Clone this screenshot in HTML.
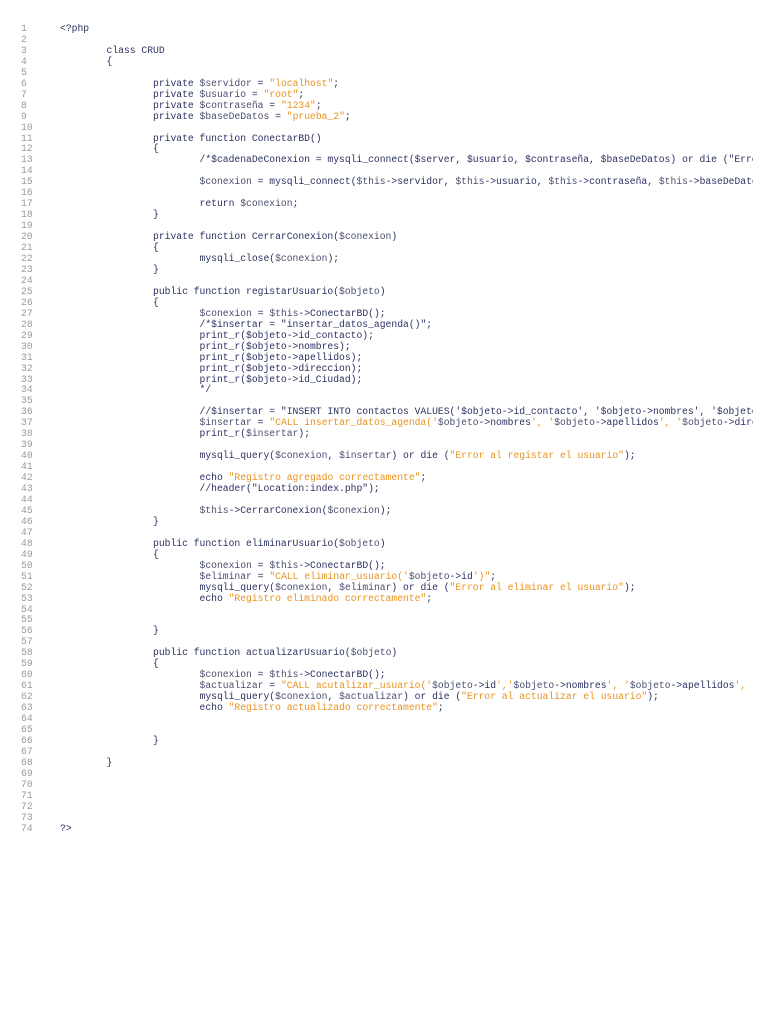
<!DOCTYPE html>
<html><head><meta charset="utf-8"><style>
html,body{margin:0;background:#fff;width:768px;height:1024px;overflow:hidden}
.w{position:absolute;left:0;top:24px;font-family:"Liberation Mono",monospace;font-size:9.7px;line-height:10.96px;white-space:pre;tab-size:8;-moz-tab-size:8}
.n{position:absolute;left:21px;color:#9a9a9a;width:30px}
.c{position:absolute;left:60px;color:#2b3160;width:693px;overflow:hidden}
.s{color:#e8921e}
.v{color:#4a4f6e}
</style></head><body>
<div class="w n">1
2
3
4
5
6
7
8
9
10
11
12
13
14
15
16
17
18
19
20
21
22
23
24
25
26
27
28
29
30
31
32
33
34
35
36
37
38
39
40
41
42
43
44
45
46
47
48
49
50
51
52
53
54
55
56
57
58
59
60
61
62
63
64
65
66
67
68
69
70
71
72
73
74</div>
<div class="w c">&lt;?php

	class CRUD
	{

		private <span class="v">$servidor</span> = <span class="s">"localhost"</span>;
		private <span class="v">$usuario</span> = <span class="s">"root"</span>;
		private <span class="v">$contraseña</span> = <span class="s">"1234"</span>;
		private <span class="v">$baseDeDatos</span> = <span class="s">"prueba_2"</span>;

		private function ConectarBD()
		{
			/*$cadenaDeConexion = mysqli_connect($server, $usuario, $contraseña, $baseDeDatos) or die ("Error al conectar");

			<span class="v">$conexion</span> = mysqli_connect(<span class="v">$this</span>-&gt;servidor, <span class="v">$this</span>-&gt;usuario, <span class="v">$this</span>-&gt;contraseña, <span class="v">$this</span>-&gt;baseDeDatos);

			return <span class="v">$conexion</span>;
		}

		private function CerrarConexion(<span class="v">$conexion</span>)
		{
			mysqli_close(<span class="v">$conexion</span>);
		}

		public function registarUsuario(<span class="v">$objeto</span>)
		{
			<span class="v">$conexion</span> = <span class="v">$this</span>-&gt;ConectarBD();
			/*$insertar = "insertar_datos_agenda()";
			print_r($objeto-&gt;id_contacto);
			print_r($objeto-&gt;nombres);
			print_r($objeto-&gt;apellidos);
			print_r($objeto-&gt;direccion);
			print_r($objeto-&gt;id_Ciudad);
			*/

			//$insertar = "INSERT INTO contactos VALUES('$objeto-&gt;id_contacto', '$objeto-&gt;nombres', '$objeto-&gt;apellidos')";
			<span class="v">$insertar</span> = <span class="s">"CALL insertar_datos_agenda('</span><span class="v">$objeto</span>-&gt;nombres<span class="s">', '</span><span class="v">$objeto</span>-&gt;apellidos<span class="s">', '</span><span class="v">$objeto</span>-&gt;direccion')";
			print_r(<span class="v">$insertar</span>);

			mysqli_query(<span class="v">$conexion</span>, <span class="v">$insertar</span>) or die (<span class="s">"Error al registar el usuario"</span>);

			echo <span class="s">"Registro agregado correctamente"</span>;
			//header("Location:index.php");

			<span class="v">$this</span>-&gt;CerrarConexion(<span class="v">$conexion</span>);
		}

		public function eliminarUsuario(<span class="v">$objeto</span>)
		{
			<span class="v">$conexion</span> = <span class="v">$this</span>-&gt;ConectarBD();
			<span class="v">$eliminar</span> = <span class="s">"CALL eliminar_usuario('</span><span class="v">$objeto</span>-&gt;id<span class="s">')"</span>;
			mysqli_query(<span class="v">$conexion</span>, <span class="v">$eliminar</span>) or die (<span class="s">"Error al eliminar el usuario"</span>);
			echo <span class="s">"Registro eliminado correctamente"</span>;


		}

		public function actualizarUsuario(<span class="v">$objeto</span>)
		{
			<span class="v">$conexion</span> = <span class="v">$this</span>-&gt;ConectarBD();
			<span class="v">$actualizar</span> = <span class="s">"CALL acutalizar_usuario('</span><span class="v">$objeto</span>-&gt;id<span class="s">','</span><span class="v">$objeto</span>-&gt;nombres<span class="s">', '</span><span class="v">$objeto</span>-&gt;apellidos<span class="s">', '</span>
			mysqli_query(<span class="v">$conexion</span>, <span class="v">$actualizar</span>) or die (<span class="s">"Error al actualizar el usuario"</span>);
			echo <span class="s">"Registro actualizado correctamente"</span>;


		}

	}





?&gt;</div>
</body></html>
